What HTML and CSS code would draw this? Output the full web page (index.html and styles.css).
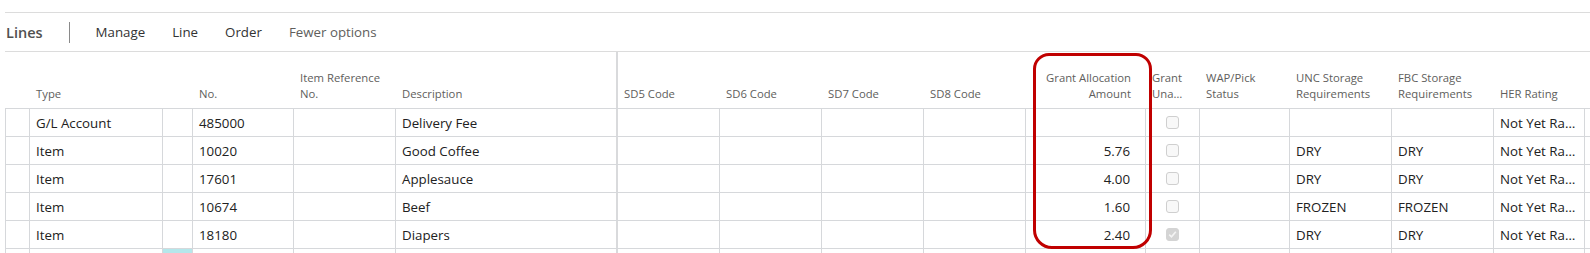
FILE: index.html
```html
<!DOCTYPE html>
<html lang="en">
<head>
    <meta charset="UTF-8">
    <title>Lines</title>
    <link rel="stylesheet" href="styles.css">
</head>
<body>
    <div class="page">
        <div class="actions">
            <span class="caption">Lines</span>
            <span class="divider"></span>
            <span class="action">Manage</span>
            <span class="action">Line</span>
            <span class="action">Order</span>
            <span class="action muted">Fewer options</span>
        </div>

        <div class="lines">
            <div class="row head">
                <div class="cell"></div>
                <div class="cell">Type</div>
                <div class="cell"></div>
                <div class="cell">No.</div>
                <div class="cell">Item Reference<br>No.</div>
                <div class="cell freeze">Description</div>
                <div class="cell">SD5 Code</div>
                <div class="cell">SD6 Code</div>
                <div class="cell">SD7 Code</div>
                <div class="cell">SD8 Code</div>
                <div class="cell num">Grant Allocation<br>Amount</div>
                <div class="cell stack"><span class="clip">Grant</span><span class="clip">Unallocated</span></div>
                <div class="cell">WAP/Pick<br>Status</div>
                <div class="cell">UNC Storage<br>Requirements</div>
                <div class="cell">FBC Storage<br>Requirements</div>
                <div class="cell">HER Rating</div>
                <div class="fill"></div>
            </div>

            <div class="row">
                <div class="cell"></div>
                <div class="cell">G/L Account</div>
                <div class="cell"></div>
                <div class="cell">485000</div>
                <div class="cell"></div>
                <div class="cell freeze">Delivery Fee</div>
                <div class="cell"></div>
                <div class="cell"></div>
                <div class="cell"></div>
                <div class="cell"></div>
                <div class="cell num"></div>
                <div class="cell check"><span class="box"></span></div>
                <div class="cell"></div>
                <div class="cell"></div>
                <div class="cell"></div>
                <div class="cell"><span class="clip">Not Yet Rated</span></div>
                <div class="fill"></div>
            </div>

            <div class="row">
                <div class="cell"></div>
                <div class="cell">Item</div>
                <div class="cell"></div>
                <div class="cell">10020</div>
                <div class="cell"></div>
                <div class="cell freeze">Good Coffee</div>
                <div class="cell"></div>
                <div class="cell"></div>
                <div class="cell"></div>
                <div class="cell"></div>
                <div class="cell num">5.76</div>
                <div class="cell check"><span class="box"></span></div>
                <div class="cell"></div>
                <div class="cell">DRY</div>
                <div class="cell">DRY</div>
                <div class="cell"><span class="clip">Not Yet Rated</span></div>
                <div class="fill"></div>
            </div>

            <div class="row">
                <div class="cell"></div>
                <div class="cell">Item</div>
                <div class="cell"></div>
                <div class="cell">17601</div>
                <div class="cell"></div>
                <div class="cell freeze">Applesauce</div>
                <div class="cell"></div>
                <div class="cell"></div>
                <div class="cell"></div>
                <div class="cell"></div>
                <div class="cell num">4.00</div>
                <div class="cell check"><span class="box"></span></div>
                <div class="cell"></div>
                <div class="cell">DRY</div>
                <div class="cell">DRY</div>
                <div class="cell"><span class="clip">Not Yet Rated</span></div>
                <div class="fill"></div>
            </div>

            <div class="row">
                <div class="cell"></div>
                <div class="cell">Item</div>
                <div class="cell"></div>
                <div class="cell">10674</div>
                <div class="cell"></div>
                <div class="cell freeze">Beef</div>
                <div class="cell"></div>
                <div class="cell"></div>
                <div class="cell"></div>
                <div class="cell"></div>
                <div class="cell num">1.60</div>
                <div class="cell check"><span class="box"></span></div>
                <div class="cell"></div>
                <div class="cell">FROZEN</div>
                <div class="cell">FROZEN</div>
                <div class="cell"><span class="clip">Not Yet Rated</span></div>
                <div class="fill"></div>
            </div>

            <div class="row">
                <div class="cell"></div>
                <div class="cell">Item</div>
                <div class="cell"></div>
                <div class="cell">18180</div>
                <div class="cell"></div>
                <div class="cell freeze">Diapers</div>
                <div class="cell"></div>
                <div class="cell"></div>
                <div class="cell"></div>
                <div class="cell"></div>
                <div class="cell num">2.40</div>
                <div class="cell check">
                    <span class="box checked">
                        <svg width="9" height="9" viewBox="0 0 9 9"><path d="M1.2 4.6 L3.5 6.8 L7.8 1.8" fill="none" stroke="#f4f4f4" stroke-width="1.6"/></svg>
                    </span>
                </div>
                <div class="cell"></div>
                <div class="cell">DRY</div>
                <div class="cell">DRY</div>
                <div class="cell"><span class="clip">Not Yet Rated</span></div>
                <div class="fill"></div>
            </div>

            <div class="row partial">
                <div class="cell"></div>
                <div class="cell"></div>
                <div class="cell active"></div>
                <div class="cell"></div>
                <div class="cell"></div>
                <div class="cell freeze"></div>
                <div class="cell"></div>
                <div class="cell"></div>
                <div class="cell"></div>
                <div class="cell"></div>
                <div class="cell num"></div>
                <div class="cell"></div>
                <div class="cell"></div>
                <div class="cell"></div>
                <div class="cell"></div>
                <div class="cell"></div>
                <div class="fill"></div>
            </div>

            <!-- highlight drawn over the Grant Allocation column -->
            <div class="callout"></div>
        </div>
    </div>
</body>
</html>
```

FILE: styles.css
```css
html, body {
    overflow: hidden;
}

body {
    margin: 0;
    font-family: 'Open Sans', 'Noto Sans', sans-serif;
    color: #212121;
    background: #fff;
    height: 253px;
}

.page {
    padding: 12px 0 0 5px;
}

.actions {
    display: flex;
    align-items: center;
    height: 38px;
    border-top: 1px solid #dcdcdc;
    border-bottom: 1px solid #dcdcdc;
    padding-left: 1px;
}

.caption {
    font-size: 14.5px;
    font-weight: 600;
    color: #505050;
}

.divider {
    width: 1px;
    height: 21px;
    background: #8a8a8a;
    margin: 1px 26px 0 26px;
}

.action {
    font-size: 13.3px;
    color: #333;
    margin-right: 27px;
}

.action.muted {
    color: #605e5c;
}

.lines {
    position: relative;
}

.row {
    display: grid;
    grid-template-columns: 25px 133px 30px 101px 102px 222px 102px 102px 102px 102px 120px 54px 90px 102px 102px 91px 1fr;
    height: 28px;
    box-sizing: border-box;
    border-bottom: 1px solid #d6d8db;
    font-size: 13.3px;
}

.row.partial {
    height: 5px;
    border-bottom: none;
}

.row .cell {
    box-sizing: border-box;
    min-width: 0;
    border-right: 1px solid #d6d8db;
    padding: 0 6px;
    display: flex;
    align-items: center;
    white-space: nowrap;
    overflow: hidden;
}

.row .cell:first-child {
    border-left: 1px solid #d6d8db;
}

.row .cell.freeze {
    border-right: 2px solid #d9dadc;
}

.row .cell.num {
    justify-content: flex-end;
    padding-right: 15px;
}

.row .cell.check {
    justify-content: center;
    padding: 0;
}

.row .cell.active {
    background: #b5e7eb;
}

.row.head {
    height: 57px;
    font-size: 11.3px;
    line-height: 16px;
    color: #605e5c;
}

.row.head .cell {
    border-right: none;
    align-items: flex-end;
    padding-bottom: 6px;
    white-space: normal;
}

.row.head .cell:first-child {
    border-left: none;
}

.row.head .cell.freeze {
    border-right: 2px solid #d9dadc;
}

.row.head .cell.num {
    text-align: right;
}

.row.head .cell.stack {
    flex-direction: column;
    align-items: stretch;
    justify-content: flex-end;
    padding-right: 17px;
}

.clip {
    display: block;
    min-width: 0;
    overflow: hidden;
    text-overflow: ellipsis;
    white-space: nowrap;
}

.row .cell:nth-child(16) {
    padding-right: 8px;
}

.box {
    width: 13px;
    height: 13px;
    box-sizing: border-box;
    border: 1px solid #cfcfcf;
    border-radius: 3px;
    background: #f8f8f8;
    display: flex;
    align-items: center;
    justify-content: center;
}

.box.checked {
    background: #d4d4d4;
    border-color: #d4d4d4;
}

.callout {
    position: absolute;
    left: 1028px;
    top: 1px;
    width: 119px;
    height: 196px;
    box-sizing: border-box;
    border: 3px solid #c00000;
    border-radius: 16px 16px 19px 19px;
}
```
